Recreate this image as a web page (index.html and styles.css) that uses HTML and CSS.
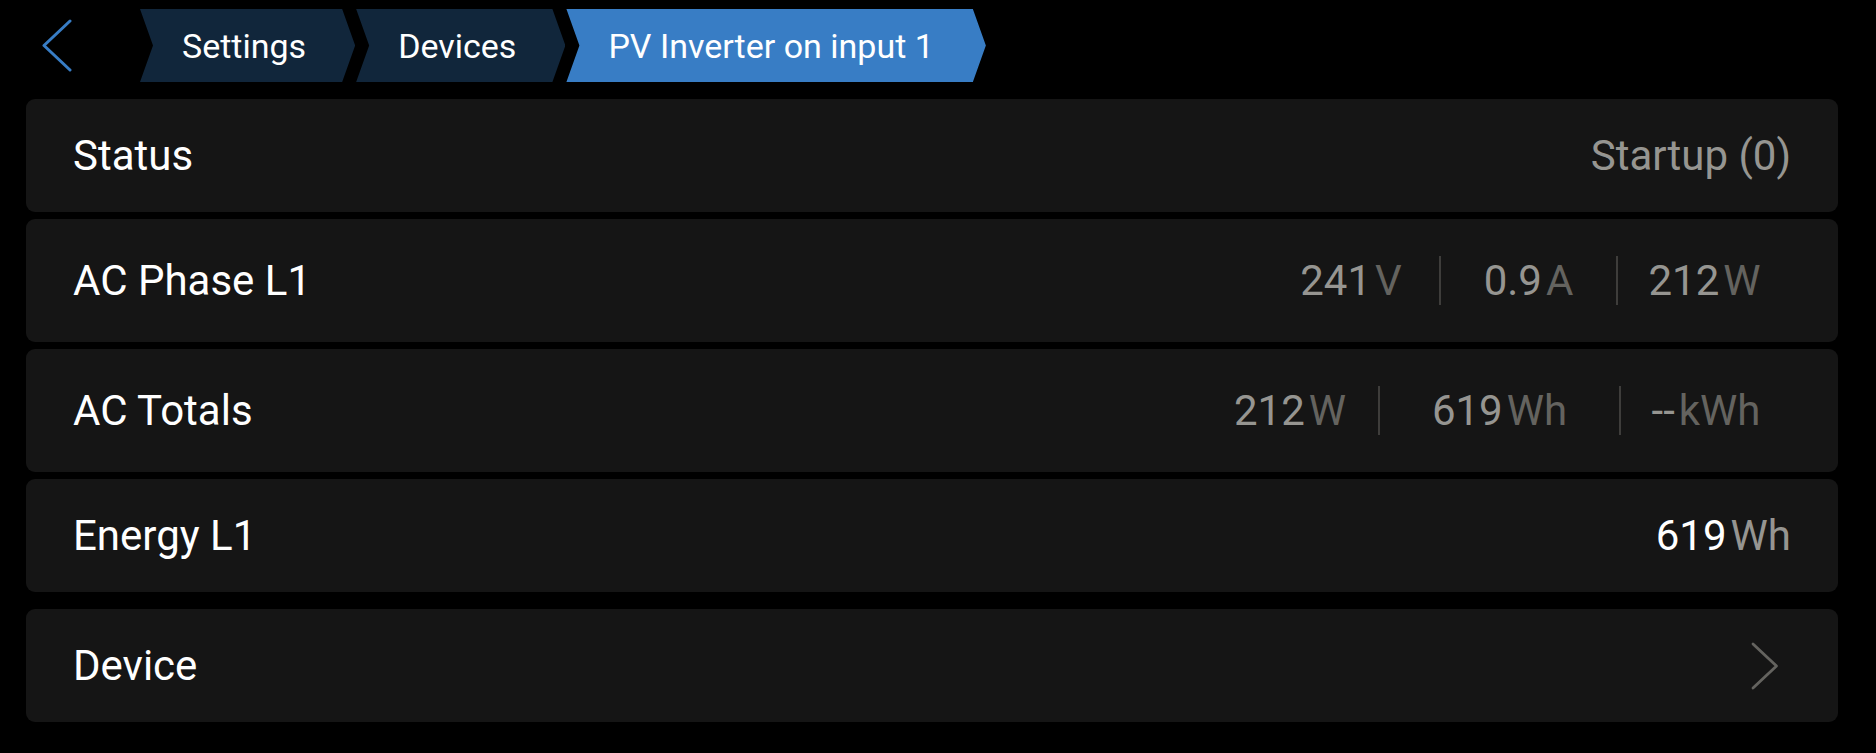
FILE: index.html
```html
<!DOCTYPE html>
<html lang="en">
<head>
    <meta charset="UTF-8">
    <meta name="viewport" content="width=device-width, initial-scale=1.0">
    <title>PV Inverter on input 1</title>
    <link rel="stylesheet" href="styles.css">
</head>
<body>

    <div class="header">
        <div class="back">
            <svg width="30" height="53" viewBox="0 0 30 53">
                <polyline points="28,2 2,26.5 28,51" fill="none" stroke="#387dc5" stroke-width="3" stroke-linecap="round" stroke-linejoin="round"/>
            </svg>
        </div>
        <div class="crumbs">
            <div class="crumb">Settings</div>
            <div class="crumb">Devices</div>
            <div class="crumb current">PV Inverter on input 1</div>
        </div>
    </div>

    <div class="list">
        <div class="card">
            <span class="label">Status</span>
            <span class="value">Startup (0)</span>
        </div>

        <div class="card tall">
            <span class="label">AC Phase L1</span>
            <div class="cells">
                <div class="cell w176"><span class="value">241</span><span class="unit">V</span></div>
                <div class="sep"></div>
                <div class="cell w175"><span class="value">0.9</span><span class="unit">A</span></div>
                <div class="sep"></div>
                <div class="cell w173"><span class="value">212</span><span class="unit">W</span></div>
            </div>
        </div>

        <div class="card tall">
            <span class="label">AC Totals</span>
            <div class="cells">
                <div class="cell w176"><span class="value">212</span><span class="unit">W</span></div>
                <div class="sep"></div>
                <div class="cell w239"><span class="value">619</span><span class="unit">Wh</span></div>
                <div class="sep"></div>
                <div class="cell w170"><span class="value">--</span><span class="unit">kWh</span></div>
            </div>
        </div>

        <div class="card">
            <span class="label">Energy L1</span>
            <span><span class="value bright">619</span><span class="unit soft">Wh</span></span>
        </div>

        <div class="card section">
            <span class="label">Device</span>
            <svg class="arrow" width="28" height="48" viewBox="0 0 28 48">
                <polyline points="2,2 25.5,24 2,46" fill="none" stroke="#64635f" stroke-width="2.8" stroke-linecap="round" stroke-linejoin="round"/>
            </svg>
        </div>
    </div>

</body>
</html>
```

FILE: styles.css
```css
/* dark settings page */
body {
    margin: 0;
    background: #000000;
    font-family: 'Roboto', 'Liberation Sans', sans-serif;
    color: #ffffff;
}
.header {
    display: flex;
    align-items: flex-start;
    height: 99px;
    padding-top: 9px;
    box-sizing: border-box;
}
.back {
    width: 140px;
    height: 73px;
    display: flex;
    align-items: center;
    padding-left: 42px;
    box-sizing: border-box;
}
.crumbs {
    display: flex;
}
.crumb {
    height: 73px;
    display: flex;
    align-items: center;
    padding: 0 49px 0 42px;
    font-size: 34px;
    background: #11263b;
    clip-path: polygon(0 0, calc(100% - 13px) 0, 100% 50%, calc(100% - 13px) 100%, 0 100%, 13px 50%);
}
.crumb + .crumb {
    margin-left: 1px;
}
.crumb.current {
    background: #387dc5;
    padding-right: 52px;
}
.list {
    display: flex;
    flex-direction: column;
    gap: 7px;
    padding: 0 38px 0 26px;
}
.card {
    height: 113px;
    background: #151515;
    border-radius: 9px;
    display: flex;
    align-items: center;
    justify-content: space-between;
    padding: 0 47px 0 47px;
}
.card.tall {
    height: 123px;
}
.card.section {
    margin-top: 10px;
}
.label {
    font-size: 42px;
    color: #ffffff;
}
.value {
    font-size: 42px;
    color: #969591;
}
.value.bright {
    color: #ffffff;
}
.unit {
    font-size: 42px;
    color: #64635f;
    margin-left: 4px;
}
.unit.soft {
    color: #969591;
}
.cells {
    display: flex;
    align-items: center;
}
.cell {
    text-align: center;
    white-space: nowrap;
}
.w176 {
    width: 176px;
}
.w175 {
    width: 175px;
}
.w173 {
    width: 173px;
}
.w239 {
    width: 239px;
}
.w170 {
    width: 170px;
}
.sep {
    width: 2px;
    height: 49px;
    background: #3e3d3b;
}
.arrow {
    margin-right: 12px;
}
```
